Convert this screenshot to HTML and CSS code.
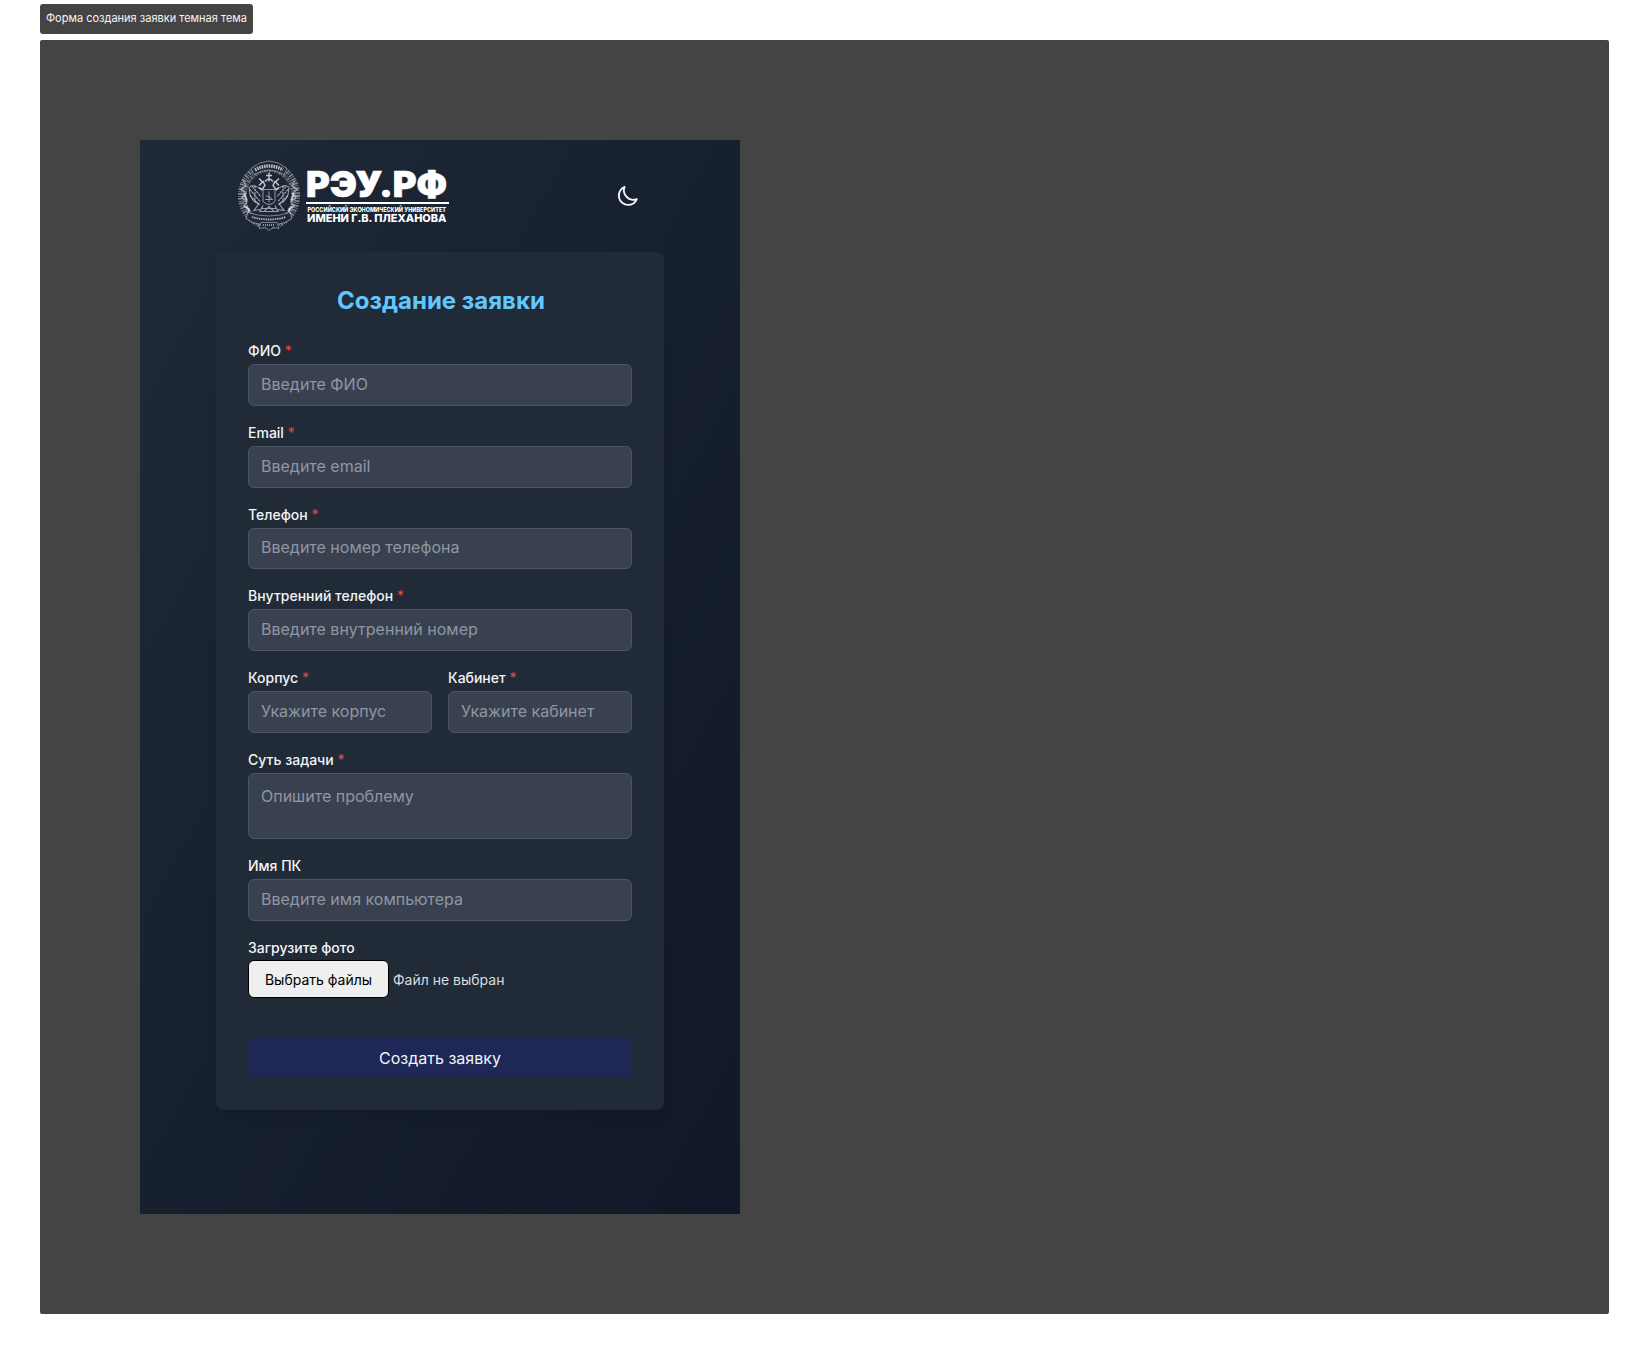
FILE: index.html
```html
<!DOCTYPE html>
<html lang="ru">
<head>
<meta charset="utf-8">
<title>Создание заявки</title>
<link rel="stylesheet" href="styles.css">
</head>
<body>
<div class="tab">Форма создания заявки темная тема</div>
<section class="board">
  <main class="screen">
    <header class="top">
      <svg class="logo" width="214" height="74" viewBox="236 158.5 214 74" role="img" aria-label="РЭУ.РФ">
        <g class="crest">
          <!-- outer wreath -->
          <ellipse cx="269" cy="195" rx="28.5" ry="31" stroke-width="5" stroke-dasharray="1.7 .9 .8 1.3" opacity=".5"/>
          <ellipse cx="269" cy="196" rx="24.5" ry="26.5" stroke-width="4" stroke-dasharray="1 1.2 2 .9" opacity=".42"/>
          <path d="M243 180l3 5-5 4 5 4-4 4 5 4-3 5 5 2-1 5 6 2M295 180l-3 5 5 4-5 4 4 4-5 4 3 5-5 2 1 5-6 2" stroke-width="1.4" opacity=".6"/>
          <path d="M244 193l3 7M246 206l4 5M294 193l-3 7M292 206l-4 5" stroke-width="1.8" opacity=".9"/>
          <!-- ribbons -->
          <path class="ribbon" d="M251 168q18-15 36 0l-3 6q-15-9-30 0z"/>
          <path d="M255 169.500q14-8 28 0" stroke-width="3.4" stroke-dasharray="1.6 .8" opacity=".8"/>
          <!-- eagle -->
          <path d="M269 172v9M266 175h6M265 181q4-5 8 0M259 185l4-4 2 4-3 4-3-2M279 185l-4-4-2 4 3 4 3-2M259 178l3 3M279 178l-3 3" stroke-width="1.4" opacity=".85"/>
          <path d="M262 190q-9-8-13-3 0 8 4 13l7 4M276 190q9-8 13-3 0 8-4 13l-7 4" opacity=".7"/>
          <path d="M250 189l10 12M252 186l9 10M250 195l9 9M255 185v17M288 189l-10 12M286 186l-9 10M288 195l-9 9M283 185v17" stroke-width="1.2" stroke-dasharray="2.5 .7" opacity=".65"/>
          <path d="M259 203l-5 7 6-1M279 203l5 7-6-1M263 205l-3 6h4l5-5 5 5h4l-3-6M262 208h14M265 211h8" stroke-width="1.2" opacity=".65"/>
          <path d="M263 189h12v12q-6 6-12 0zM269 191v11M266 195l6 3M265 199h8" opacity=".6"/>
          <path class="ribbon" d="M248 212q21 7 42 0l2 6-7 4q-16 5-32 0l-7-4z"/>
          <path d="M252 216.500q17 5 34 0" stroke-width="1.8" stroke-dasharray="1.4 .9" opacity=".8"/>
          <path class="ribbon" d="M261 222h16l2 6-6-1-4 3-4-3-6 1z"/>
          <path d="M263 224.500h12" stroke-width="2" stroke-dasharray="1 1" opacity=".6"/>
        </g>
        <g class="wordmark">
          <text class="word-big" x="306" y="196.400" textLength="141" lengthAdjust="spacingAndGlyphs">РЭУ.РФ</text>
          <rect x="306" y="201.500" width="143" height="2"/>
          <text class="word-small" x="307.500" y="211.800" textLength="138.500" lengthAdjust="spacingAndGlyphs">РОССИЙСКИЙ ЭКОНОМИЧЕСКИЙ УНИВЕРСИТЕТ</text>
          <text class="word-mid" x="307" y="221.500" textLength="139.500" lengthAdjust="spacingAndGlyphs">ИМЕНИ Г.В. ПЛЕХАНОВА</text>
        </g>
      </svg>
      <svg class="moon" width="24" height="24" viewBox="0.3 0.8 23.200 23.200"><path d="M20.354 15.354A9 9 0 0 1 8.646 3.646 9.003 9.003 0 0 0 12 21a9.003 9.003 0 0 0 8.354-5.646Z"/></svg>
    </header>
    <form class="card">
      <h1 class="title">Создание заявки</h1>
      <label class="field"><span class="label">ФИО <i>*</i></span><input class="input" placeholder="Введите ФИО"></label>
      <label class="field"><span class="label">Email <i>*</i></span><input class="input" placeholder="Введите email"></label>
      <label class="field"><span class="label">Телефон <i>*</i></span><input class="input" placeholder="Введите номер телефона"></label>
      <label class="field"><span class="label">Внутренний телефон <i>*</i></span><input class="input" placeholder="Введите внутренний номер"></label>
      <div class="pair">
        <label class="field"><span class="label">Корпус <i>*</i></span><input class="input" placeholder="Укажите корпус"></label>
        <label class="field"><span class="label">Кабинет <i>*</i></span><input class="input" placeholder="Укажите кабинет"></label>
      </div>
      <label class="field"><span class="label">Суть задачи <i>*</i></span><textarea class="input area" placeholder="Опишите проблему"></textarea></label>
      <label class="field"><span class="label">Имя ПК</span><input class="input" placeholder="Введите имя компьютера"></label>
      <div class="field"><span class="label">Загрузите фото</span>
        <div class="upload"><button type="button" class="choose">Выбрать файлы</button><span class="status">Файл не выбран</span></div>
      </div>
      <button type="button" class="submit">Создать заявку</button>
    </form>
  </main>
</section>
</body>
</html>
```
FILE: styles.css
```css
* { box-sizing: border-box; }
body {
  margin: 0;
  padding: 4px 40px 0;
  height: 1354px;
  background: #fff;
  font-family: Inter, "Liberation Sans", sans-serif;
  color: #f3f4f6;
}
.tab {
  width: 213px;
  height: 30px;
  padding-left: 6px;
  border-radius: 3px;
  background: #444;
  font-size: 11px;
  line-height: 28px;
  white-space: nowrap;
}
.board {
  height: 1273.5px;
  margin-top: 6px;
  padding: 100px;
  border-radius: 2px;
  background: #444;
}
.screen {
  width: 600px;
  height: 1074px;
  padding: 0 76px;
  background: linear-gradient(to bottom right, #1f2937, #17202e 50%, #111827);
}
.top {
  display: flex;
  align-items: center;
  justify-content: space-between;
  height: 112px;
  padding: 0 24px 0 20px;
}
.logo { overflow: visible; }
.crest { fill: none; stroke: #dfe4ea; }
.ribbon { fill: #1f2937; stroke-width: .8; stroke-opacity: .6; }
.wordmark { fill: #fff; font-family: Inter, sans-serif; font-weight: 900; }
.word-big { font-size: 35px; stroke: #fff; stroke-width: .6px; }
.word-small { font-size: 6.2px; font-weight: 800; }
.word-mid { font-size: 11px; font-weight: 800; }
.moon { fill: none; stroke: #f3f4f6; stroke-width: 1.8; stroke-linecap: round; stroke-linejoin: round; }
.card {
  display: flex;
  flex-direction: column;
  gap: 16px;
  height: 858px;
  padding: 32px;
  border-radius: 8px;
  background: #212a37;
  box-shadow: 0 10px 15px -3px rgba(0, 0, 0, .06), 0 4px 6px -4px rgba(0, 0, 0, .1);
}
.title {
  margin: 0 0 8px;
  height: 32px;
  padding-left: 2px;
  color: #63c7ff;
  font-size: 24px;
  line-height: 34px;
  font-weight: 700;
  text-align: center;
}
.field { display: flex; flex-direction: column; gap: 4px; }
.label { height: 20px; font-size: 14px; line-height: 21px; font-weight: 500; }
.label i { color: #ef4444; font-style: normal; font-weight: 400; }
.input {
  width: 100%;
  height: 41.75px;
  padding: 7px 12px 9px;
  border: 1px solid #4b5563;
  border-radius: 6px;
  background: #394150;
  color: #fff;
  font: 16px/24px Inter, sans-serif;
}
.input::placeholder { color: #9096a1; opacity: 1; }
.area { height: 66px; padding-top: 10px; resize: none; }
.pair { display: grid; grid-template-columns: 1fr 1fr; gap: 16px; }
.upload { display: flex; align-items: center; gap: 4px; height: 37.5px; }
.choose {
  width: 141px;
  height: 38px;
  padding: 1px 0 0;
  border: 1px solid #000;
  border-radius: 6px;
  background: #efefef;
  color: #000;
  font: 14px/20px Inter, sans-serif;
}
.status { color: #d9dbdf; font-size: 14px; }
.submit {
  height: 40px;
  margin-top: auto;
  border: 0;
  border-radius: 4px;
  background: #1e2756;
  color: #f3f4f6;
  font: 16px/24px Inter, sans-serif;
}
```
